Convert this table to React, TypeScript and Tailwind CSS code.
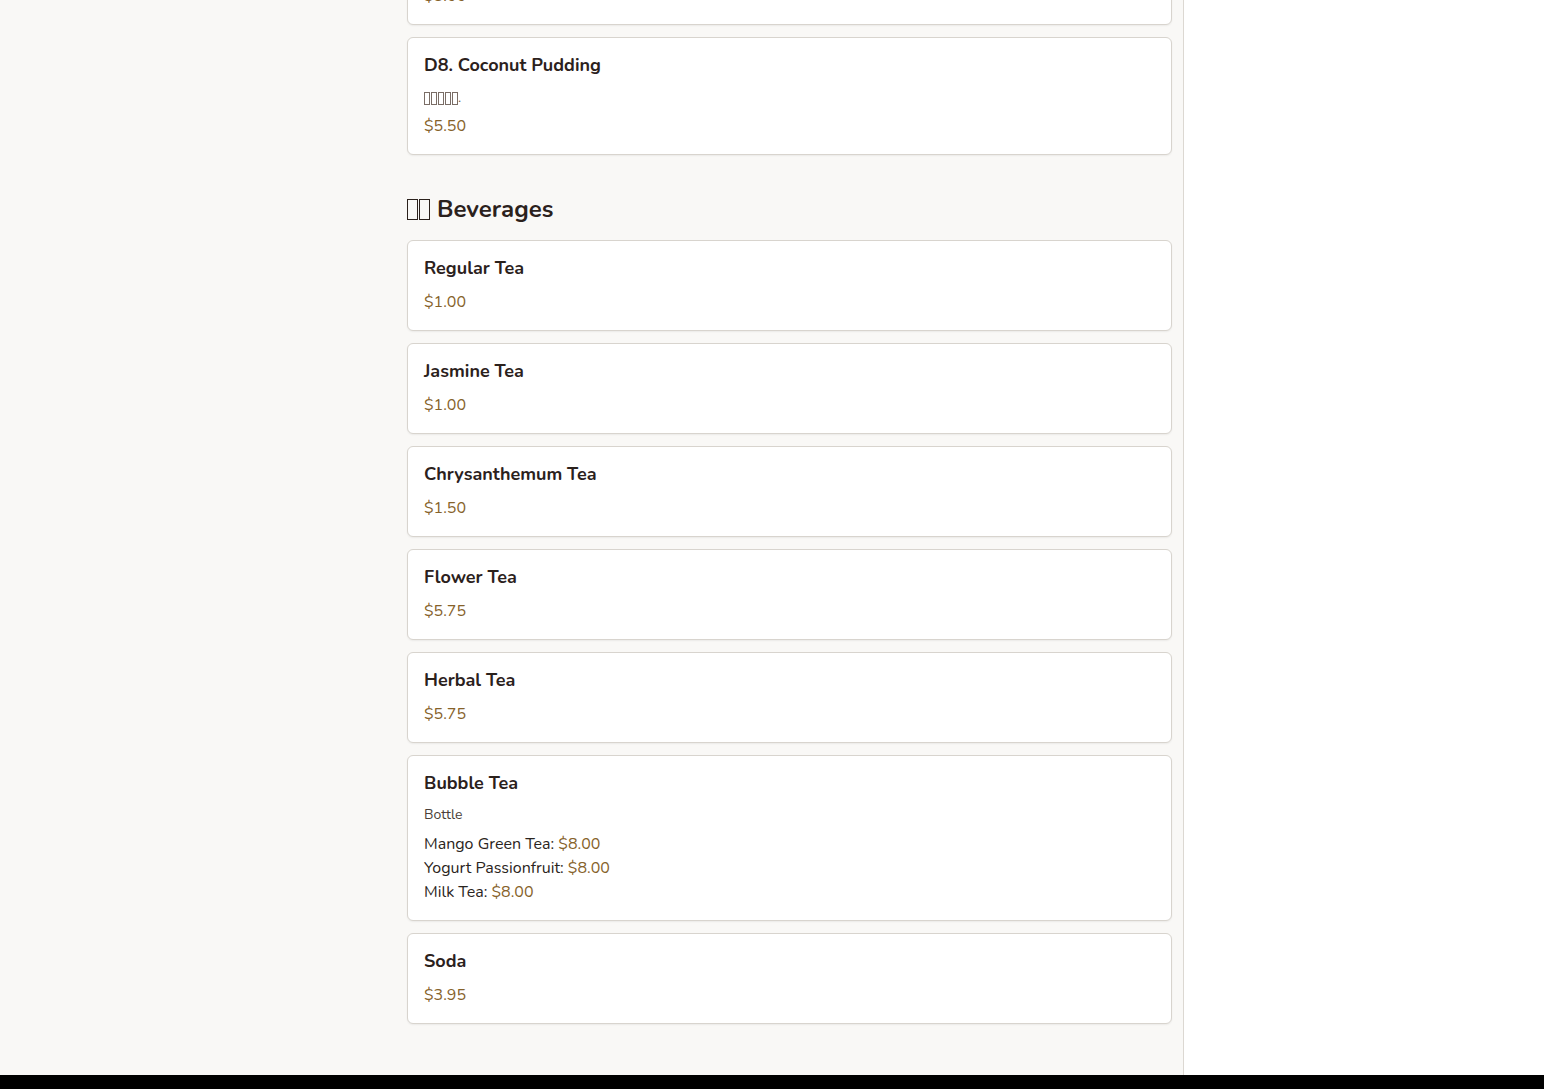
import React from "react";

type Option = { name: string; price: string };
type Item = {
  name: string;
  desc?: string;
  tofu?: number;
  price?: string;
  options?: Option[];
};

const beverages: Item[] = [
  { name: "Regular Tea", price: "$1.00" },
  { name: "Jasmine Tea", price: "$1.00" },
  { name: "Chrysanthemum Tea", price: "$1.50" },
  { name: "Flower Tea", price: "$5.75" },
  { name: "Herbal Tea", price: "$5.75" },
  {
    name: "Bubble Tea",
    desc: "Bottle",
    options: [
      { name: "Mango Green Tea", price: "$8.00" },
      { name: "Yogurt Passionfruit", price: "$8.00" },
      { name: "Milk Tea", price: "$8.00" },
    ],
  },
  { name: "Soda", price: "$3.95" },
];

// missing-glyph boxes, as the reference shows them
function Tofu({ count, big }: { count: number; big?: boolean }) {
  return (
    <span className="inline-flex items-center gap-px align-middle">
      {Array.from({ length: count }).map((_, i) => (
        <span
          key={i}
          className={
            big
              ? "inline-block w-[11px] h-[21px] border-[1.5px] border-[#2b211c]"
              : "inline-block w-[6px] h-[13px] border border-[#7a6d66]"
          }
        />
      ))}
    </span>
  );
}

function MenuCard({ item }: { item: Item }) {
  return (
    <div className="bg-white border border-[#d8d4ce] rounded-md shadow-[0_1px_2px_rgba(0,0,0,0.06)] p-4">
      <h3 className="text-lg leading-[22px] font-bold text-[#2b211c] mb-[11px]">{item.name}</h3>
      {item.tofu ? (
        <p className="text-sm leading-[22px] text-[#6b5d55] mb-[5px] flex items-center">
          <Tofu count={item.tofu} />
          <span>.</span>
        </p>
      ) : null}
      {item.desc ? (
        <p className="text-sm leading-5 text-[#4a3f38] mb-[7px]">{item.desc}</p>
      ) : null}
      {item.price ? <p className="leading-6 text-[#86622a]">{item.price}</p> : null}
      {item.options ? (
        <ul>
          {item.options.map((o) => (
            <li key={o.name} className="leading-6 text-[#2a2420]">
              {o.name}: <span className="text-[#86622a]">{o.price}</span>
            </li>
          ))}
        </ul>
      ) : null}
    </div>
  );
}

export default function App() {
  return (
    <div
      className="h-[1089px] overflow-hidden flex flex-col bg-white"
      style={{ fontFamily: "Nunito, Lato, 'Noto Sans', sans-serif" }}
    >
      <div className="flex h-[1075px] shrink-0">
        <main className="w-[1184px] bg-[#f9f8f6] border-r border-[#dcd8d2] pl-[407px] pr-[11px] overflow-hidden">
          <div className="-mt-[66px] flex flex-col gap-3">
            <MenuCard item={{ name: "D7. Mango Pudding", price: "$5.00" }} />
            <MenuCard item={{ name: "D8. Coconut Pudding", tofu: 5, price: "$5.50" }} />
          </div>

          <section className="pt-[39px] pb-12">
            <h2 className="text-2xl leading-[30px] font-bold text-[#2b211c] mb-4 flex items-center gap-[7px]">
              <Tofu count={2} big />
              <span>Beverages</span>
            </h2>
            <div className="flex flex-col gap-3">
              {beverages.map((b) => (
                <MenuCard key={b.name} item={b} />
              ))}
            </div>
          </section>
        </main>
        <aside className="flex-1 bg-white" />
      </div>
      <footer className="bg-black flex-1" />
    </div>
  );
}
